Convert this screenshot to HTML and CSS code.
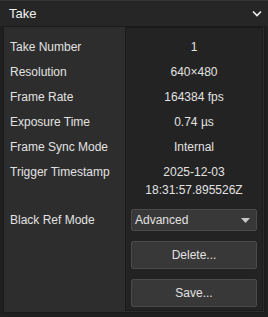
FILE: index.html
```html
<!DOCTYPE html>
<html lang="en">
<head>
  <meta charset="UTF-8" />
  <title>Take</title>
  <link rel="stylesheet" href="styles.css">
</head>
<body>
  <div class="panel">
    <!-- header -->
    <div class="panel-header">
      <span class="panel-title">Take</span>
      <svg class="chevron" width="10" height="7" viewBox="0 0 10 7">
        <path d="M1 1.5 L5 5.5 L9 1.5" fill="none" stroke="#f0f0f0" stroke-width="1.6"/>
      </svg>
    </div>

    <!-- props -->
    <div class="panel-body">
      <div class="labels">
        <div class="row">Take Number</div>
        <div class="row">Resolution</div>
        <div class="row">Frame Rate</div>
        <div class="row">Exposure Time</div>
        <div class="row">Frame Sync Mode</div>
        <div class="row row-tall">Trigger Timestamp</div>
        <div class="row row-ctrl">Black Ref Mode</div>
      </div>
      <div class="values">
        <div class="row">1</div>
        <div class="row">640×480</div>
        <div class="row">164384 fps</div>
        <div class="row">0.74 µs</div>
        <div class="row">Internal</div>
        <div class="row row-tall">2025-12-03<br>18:31:57.895526Z</div>
        <div class="row row-ctrl">
          <div class="select">
            <span>Advanced</span>
            <svg width="9" height="5" viewBox="0 0 9 5"><path d="M0 0 H9 L4.5 5 Z" fill="#c8c8c8"/></svg>
          </div>
        </div>
        <button class="btn">Delete...</button>
        <button class="btn">Save...</button>
      </div>
    </div>
  </div>
</body>
</html>
```

FILE: styles.css
```css
body {
  margin: 0;
  padding: 0;
  background: #1f1f1f;
  font-family: 'Liberation Sans', Arial, sans-serif;
  font-size: 12px;
  color: #e2e2e2;
}

.panel {
  width: 268px;
  height: 317px;
  box-sizing: border-box;
  border-top: 1px solid #353535;
  display: flex;
  flex-direction: column;
}

.panel-header {
  height: 25px;
  background: #262626;
  display: flex;
  align-items: center;
  justify-content: space-between;
  padding: 0 6px 0 9px;
  font-size: 13px;
  color: #f2f2f2;
}

.panel-body {
  margin: 0 3px 4px 3px;
  border: 1px solid #1a1a1a;
  background: #2d2d2d;
  display: flex;
  flex: 1;
}

.labels {
  width: 121px;
  padding: 8px 0 0 6px;
  box-sizing: border-box;
}

.values {
  flex: 1;
  background: #232323;
  border: 1px solid #1a1a1a;
  margin: 0 1px 1px 0;
  padding: 7px 5px 0 5px;
  display: flex;
  flex-direction: column;
  align-items: stretch;
}

.row {
  height: 25px;
  line-height: 25px;
  white-space: nowrap;
}

.values .row {
  text-align: center;
}

.row-tall {
  height: 44px;
  line-height: 18px;
  padding-top: 3px;
}

.row-ctrl {
  height: 22px;
  line-height: 22px;
  margin-top: 2px;
  display: flex;
  align-items: center;
}

.select {
  flex: 1;
  height: 20px;
  background: #383838;
  border: 1px solid #4a4a4a;
  border-radius: 2px;
  display: flex;
  align-items: center;
  justify-content: space-between;
  padding: 0 6px 0 3px;
  text-align: left;
}

.btn {
  height: 28px;
  margin-top: 10px;
  background: #383838;
  border: 1px solid #4a4a4a;
  border-radius: 2px;
  color: #e2e2e2;
  font-family: inherit;
  font-size: 12px;
}
```
